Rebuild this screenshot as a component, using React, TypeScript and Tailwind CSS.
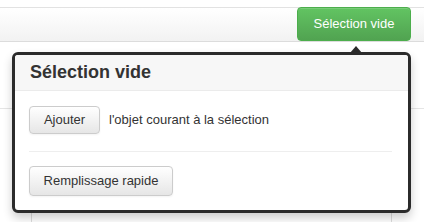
export default function App() {
  const font = { fontFamily: '"Liberation Sans", Arial, sans-serif' };
  return (
    <div className="relative w-[424px] h-[222px] overflow-hidden bg-white text-[#333]" style={font}>
      {/* toolbar */}
      <div className="pt-[7px]">
        <div className="border-t border-[#e2e2e2] border-b border-b-[#dcdcdc] h-[35px] bg-gradient-to-b from-white to-[#f2f2f2] flex justify-end pr-[13px]">
          <button className="h-[34px] -mt-px w-[114px] rounded-[4px] border border-[#4cae4c] bg-gradient-to-b from-[#62c462] to-[#51a351] text-white text-[13px] shadow-[inset_0_1px_0_rgba(255,255,255,0.15)]">
            Sélection vide
          </button>
        </div>
      </div>

      {/* page content behind */}
      <div className="mt-[66px] border-t border-[#e5e5e5] h-[120px] flex">
        <div className="w-[32px] border-r border-[#dddddd]" />
        <div className="w-[360px] border-r border-[#dddddd]" />
      </div>

      {/* popover arrow */}
      <div className="absolute left-[350px] top-[46px] w-0 h-0 border-x-[6px] border-x-transparent border-b-[7px] border-b-[#2b2b2b]" />

      {/* popover */}
      <div className="absolute left-[12px] top-[52px] w-[399px] h-[161px] rounded-[6px] border-[3px] border-[#2b2b2b] bg-white shadow-[0_5px_10px_rgba(0,0,0,0.2)] overflow-hidden">
        <div className="h-[36px] bg-[#f7f7f7] border-b border-[#ebebeb] px-[15px] flex items-center">
          <span className="text-[18px] font-bold text-[#333]">Sélection vide</span>
        </div>
        <div className="px-[14px] pt-[15px]">
          <div className="flex items-center gap-[9px]">
            <button className="h-[28px] w-[71px] rounded-[4px] border border-[#cccccc] bg-gradient-to-b from-white to-[#e6e6e6] text-[13px] text-[#333] shadow-[inset_0_1px_0_rgba(255,255,255,0.2),0_1px_2px_rgba(0,0,0,0.05)]">
              Ajouter
            </button>
            <span className="text-[13px] text-[#333]">l'objet courant à la sélection</span>
          </div>
          <div className="mt-[17px] mr-[2px] border-t border-[#eeeeee]" />
          <button className="mt-[14px] h-[30px] w-[144px] rounded-[4px] border border-[#cccccc] bg-gradient-to-b from-white to-[#e6e6e6] text-[13px] text-[#333] shadow-[inset_0_1px_0_rgba(255,255,255,0.2),0_1px_2px_rgba(0,0,0,0.05)]">
            Remplissage rapide
          </button>
        </div>
      </div>
    </div>
  );
}
